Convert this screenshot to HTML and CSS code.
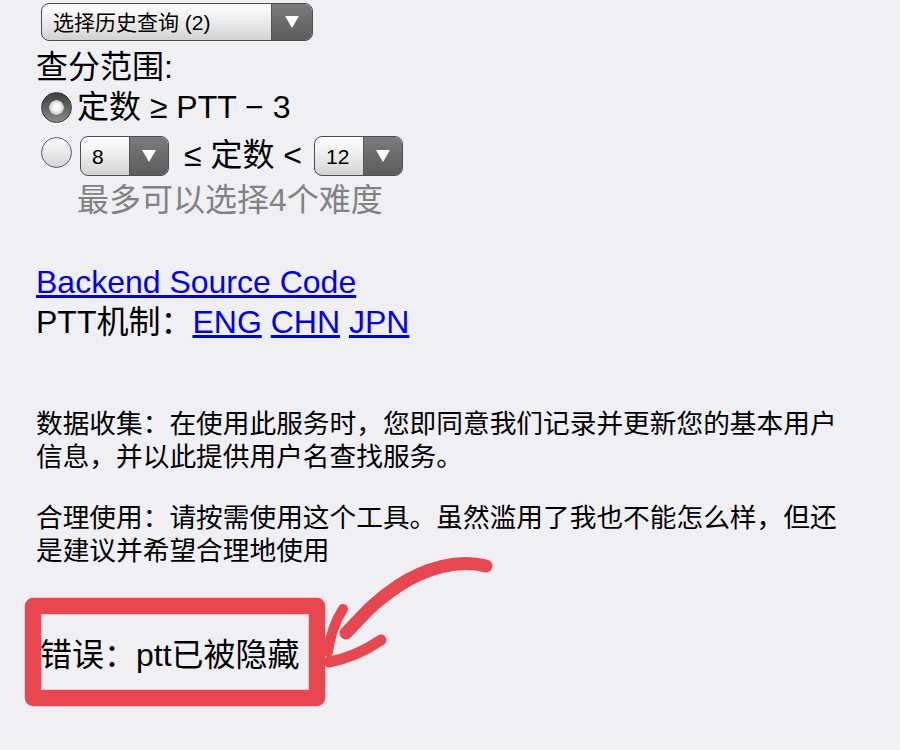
FILE: index.html
```html
<!DOCTYPE html>
<html lang="zh-CN">
<head>
  <meta charset="UTF-8">
  <meta name="viewport" content="width=device-width, initial-scale=1.0">
  <title>查分</title>
  <link rel="stylesheet" href="styles.css">
</head>
<body>
  <div class="page">
    <div class="select-box history">
      <select>
        <option>选择历史查询 (2)</option>
      </select>
      <span class="select-arrow"></span>
    </div>

    <div class="label">查分范围:</div>

    <label class="radio-row">
      <input type="radio" name="range" checked>
      <span class="radio-text">定数 ≥ PTT − 3</span>
    </label>

    <div class="radio-row custom">
      <input type="radio" name="range">
      <div class="select-box small">
        <select>
          <option>8</option>
        </select>
        <span class="select-arrow"></span>
      </div>
      <span class="between">≤ 定数 &lt;</span>
      <div class="select-box small">
        <select>
          <option>12</option>
        </select>
        <span class="select-arrow"></span>
      </div>
    </div>
    <div class="hint">最多可以选择4个难度</div>

    <div class="links">
      <a href="#">Backend Source Code</a><br>
      PTT机制：<a href="#">ENG</a> <a href="#">CHN</a> <a href="#">JPN</a>
    </div>

    <p class="notice first">数据收集：在使用此服务时，您即同意我们记录并更新您的基本用户信息，并以此提供用户名查找服务。</p>
    <p class="notice">合理使用：请按需使用这个工具。虽然滥用了我也不能怎么样，但还是建议并希望合理地使用</p>

    <div class="error">错误：ptt已被隐藏</div>
  </div>

  <svg class="annotation" width="900" height="750" viewBox="0 0 900 750">
    <rect x="33" y="606" width="284" height="92" fill="none" stroke="#e8474f" stroke-width="16.5" stroke-linejoin="round"/>
    <path d="M486 566 C458 559 425 568 398 586 S362 617 346 633" fill="none" stroke="#e8474f" stroke-width="13" stroke-linecap="round"/>
    <path d="M343 609 Q331 628 328 652" fill="none" stroke="#e8474f" stroke-width="10" stroke-linecap="round"/>
    <path d="M381 640 Q356 657 329 662" fill="none" stroke="#e8474f" stroke-width="11" stroke-linecap="round"/>
  </svg>
</body>
</html>
```
FILE: styles.css
```css
html, body {
  margin: 0;
  background-color: #efeff4;
}

body {
  font-family: "Liberation Sans", "Noto Sans CJK SC", sans-serif;
  font-size: 32px;
  line-height: 40px;
  color: #000;
}

.page {
  padding: 3px 0 0 36px;
}

/* selects, old iOS look */
.select-box {
  display: flex;
  box-sizing: border-box;
  border: 1.5px solid #4d4d4d;
  border-radius: 8px;
  overflow: hidden;
  background: linear-gradient(#ffffff, #eeeeee 45%, #d2d2d2);
}

.select-box select {
  flex: 1;
  min-width: 0;
  appearance: none;
  -webkit-appearance: none;
  border: none;
  outline: none;
  background: transparent;
  font-family: "Liberation Sans", "Noto Sans CJK SC", sans-serif;
  font-size: 21px;
  color: #000;
  padding: 0 0 0 11px;
  margin: 0;
}

.select-arrow {
  width: 40px;
  display: flex;
  align-items: center;
  justify-content: center;
  border-left: 1px solid #555;
  background: linear-gradient(#7b7b7b, #5c5c5c);
}

.select-arrow::after {
  content: "";
  border-left: 7px solid transparent;
  border-right: 7px solid transparent;
  border-top: 12px solid #fff;
}

.history {
  width: 272px;
  height: 38px;
  margin-left: 5px;
}

.small {
  width: 89px;
  height: 40px;
}

.small .select-arrow {
  width: 38px;
}

.label {
  margin-top: 6px;
}

/* radios */
.radio-row {
  display: flex;
  align-items: center;
  height: 40px;
}

.radio-row input {
  appearance: none;
  -webkit-appearance: none;
  width: 31px;
  height: 31px;
  margin: 0 5px 0 5px;
  border-radius: 50%;
  box-sizing: border-box;
  border: 1.5px solid #5a5a5a;
  background: linear-gradient(#fdfdfd, #d6d6d6);
}

.radio-row input:checked {
  border-color: #3c3c3c;
  background:
    radial-gradient(circle, #ffffff 0, #f2f2f2 4px, #c9c9c9 7px, rgba(0,0,0,0) 7.5px),
    linear-gradient(#3d3d3d, #8a8a8a);
}

.custom {
  align-items: flex-start;
  height: 53px;
}

.custom input {
  margin-top: 10px;
  margin-right: 8px;
}

.custom .select-box {
  margin-top: 9px;
}

.between {
  margin: 8px 12px 0 15px;
}

.hint {
  color: #828282;
  padding-left: 41px;
}

.links {
  margin-top: 42px;
}

a {
  color: #0000ee;
  text-decoration: underline;
}

.notice {
  width: 815px;
  margin: 27.5px 0 0 0;
  font-size: 26.7px;
  line-height: 33px;
}

.notice.first {
  margin-top: 66px;
}

.error {
  margin-top: 67.5px;
  padding-left: 4px;
}

.annotation {
  position: absolute;
  top: 0;
  left: 0;
  pointer-events: none;
}
```
